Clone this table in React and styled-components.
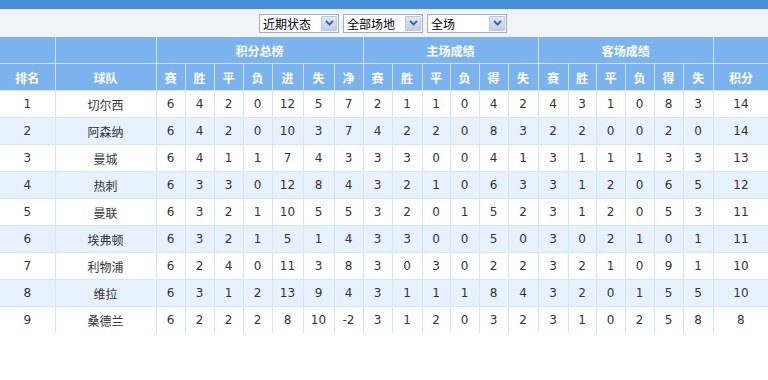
import React from "react";
import styled, { createGlobalStyle } from "styled-components";

const Global = createGlobalStyle`
  html, body { margin: 0; padding: 0; background: #fff; }
  body { font-family: "DejaVu Sans", "Noto Sans CJK SC", sans-serif; }
`;

const Page = styled.div`
  width: 768px;
`;

const TopBar = styled.div`
  height: 9px;
  background: #4a90d9;
`;

const Toolbar = styled.div`
  height: 28px;
  background: #f0f4f7;
  display: flex;
  align-items: center;
  justify-content: center;
  gap: 4px;
  padding-right: 2px;
`;

const SelectBox = styled.div`
  box-sizing: border-box;
  width: 80px;
  height: 19px;
  border: 1px solid #a5acb2;
  background: #fff;
  display: flex;
  align-items: center;
  justify-content: space-between;
  padding: 0 1px 0 3px;
`;

const SelectText = styled.span`
  font-family: "Noto Sans CJK SC", sans-serif;
  font-size: 12px;
  color: #000;
  line-height: 17px;
`;

const ArrowBtn = styled.span`
  box-sizing: border-box;
  width: 16px;
  height: 15px;
  border: 1px solid #b7c8e6;
  border-radius: 1px;
  background: linear-gradient(#dfe8f8, #bccdee);
  display: flex;
  align-items: center;
  justify-content: center;
`;

const Table = styled.table`
  width: 768px;
  table-layout: fixed;
  border-collapse: collapse;
`;

const Th = styled.th`
  height: 26px;
  padding: 0;
  background: #7ab3ee;
  color: #fff;
  font-family: "Noto Sans CJK SC", sans-serif;
  font-weight: 700;
  font-size: 12px;
  text-align: center;
  border-right: 1px solid #d2e6fb;
  border-bottom: 1px solid #d2e6fb;
  &:last-child { border-right: none; }
`;

const Row = styled.tr`
  background: ${(p) => (p.$alt ? "#e8f2fe" : "#fff")};
  &:last-child td { border-bottom: none; }
`;

const Td = styled.td`
  height: 26px;
  padding: 0;
  text-align: center;
  color: #333;
  font-size: 12px;
  font-family: ${(p) => (p.$cjk ? `"Noto Sans CJK SC", sans-serif` : `"DejaVu Sans", sans-serif`)};
  border-right: 1px solid #d2e6fb;
  border-bottom: 1px solid #d2e6fb;
  &:last-child { border-right: none; }
`;

const widths = [55, 101, 29, 29, 29, 29, 31, 31, 29, 29, 30, 28, 29, 29, 30, 30, 28, 29, 29, 29, 30, 55];

const subHeads = ["排名", "球队", "赛", "胜", "平", "负", "进", "失", "净", "赛", "胜", "平", "负", "得", "失", "赛", "胜", "平", "负", "得", "失", "积分"];

const rows = [
  ["1", "切尔西", 6, 4, 2, 0, 12, 5, 7, 2, 1, 1, 0, 4, 2, 4, 3, 1, 0, 8, 3, 14],
  ["2", "阿森纳", 6, 4, 2, 0, 10, 3, 7, 4, 2, 2, 0, 8, 3, 2, 2, 0, 0, 2, 0, 14],
  ["3", "曼城", 6, 4, 1, 1, 7, 4, 3, 3, 3, 0, 0, 4, 1, 3, 1, 1, 1, 3, 3, 13],
  ["4", "热刺", 6, 3, 3, 0, 12, 8, 4, 3, 2, 1, 0, 6, 3, 3, 1, 2, 0, 6, 5, 12],
  ["5", "曼联", 6, 3, 2, 1, 10, 5, 5, 3, 2, 0, 1, 5, 2, 3, 1, 2, 0, 5, 3, 11],
  ["6", "埃弗顿", 6, 3, 2, 1, 5, 1, 4, 3, 3, 0, 0, 5, 0, 3, 0, 2, 1, 0, 1, 11],
  ["7", "利物浦", 6, 2, 4, 0, 11, 3, 8, 3, 0, 3, 0, 2, 2, 3, 2, 1, 0, 9, 1, 10],
  ["8", "维拉", 6, 3, 1, 2, 13, 9, 4, 3, 1, 1, 1, 8, 4, 3, 2, 0, 1, 5, 5, 10],
  ["9", "桑德兰", 6, 2, 2, 2, 8, 10, -2, 3, 1, 2, 0, 3, 2, 3, 1, 0, 2, 5, 8, 8],
];

function Select({ label }) {
  return (
    <SelectBox>
      <SelectText>{label}</SelectText>
      <ArrowBtn>
        <svg width="9" height="6" viewBox="0 0 9 6">
          <path d="M1 1 L4.5 4.5 L8 1" fill="none" stroke="#4b5d80" strokeWidth="1.8" />
        </svg>
      </ArrowBtn>
    </SelectBox>
  );
}

export default function App() {
  return (
    <Page>
      <Global />
      <TopBar />
      <Toolbar>
        <Select label="近期状态" />
        <Select label="全部场地" />
        <Select label="全场" />
      </Toolbar>
      <Table>
        <colgroup>
          {widths.map((w, i) => (
            <col key={i} style={{ width: w }} />
          ))}
        </colgroup>
        <thead>
          <tr>
            <Th />
            <Th />
            <Th colSpan={7}>积分总榜</Th>
            <Th colSpan={6}>主场成绩</Th>
            <Th colSpan={6}>客场成绩</Th>
            <Th />
          </tr>
          <tr>
            {subHeads.map((h, i) => (
              <Th key={i}>{h}</Th>
            ))}
          </tr>
        </thead>
        <tbody>
          {rows.map((r, ri) => (
            <Row key={ri} $alt={ri % 2 === 1}>
              {r.map((c, ci) => (
                <Td key={ci} $cjk={ci === 1}>
                  {c}
                </Td>
              ))}
            </Row>
          ))}
        </tbody>
      </Table>
    </Page>
  );
}
